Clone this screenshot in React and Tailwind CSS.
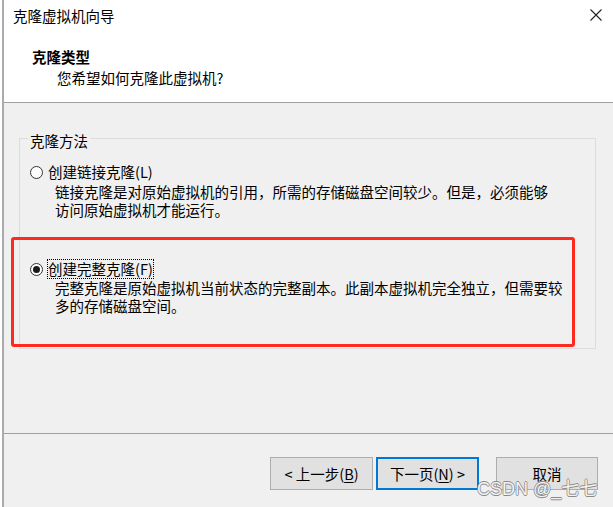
import React from "react";

const font = "font-['Noto_Sans_CJK_SC','Microsoft_YaHei',sans-serif]";

function Radio({ checked }) {
  return (
    <span className="w-[13px] h-[13px] rounded-full border border-[#333333] bg-white flex items-center justify-center shrink-0">
      {checked && <span className="w-[7px] h-[7px] rounded-full bg-[#1a1a1a]" />}
    </span>
  );
}

export default function App() {
  return (
    <div className={`relative w-[613px] h-[507px] bg-white pl-[2px] overflow-hidden text-black ${font} text-[14.5px] leading-[18px]`}>
      <div className="h-full flex flex-col border-l-2 border-[#ababab]">
        {/* Header */}
        <div className="h-[103px] bg-white border-b border-[#a0a0a0] flex flex-col">
          <div className="h-[30px] flex items-center justify-between pl-[9px] pr-[11px]">
            <span className="leading-[21px]">克隆虚拟机向导</span>
            <svg width="12" height="12" viewBox="0 0 12 12" className="mt-[-1px]">
              <path d="M0.5 0.5 L11.5 11.5 M11.5 0.5 L0.5 11.5" stroke="#222" strokeWidth="1.1" fill="none" />
            </svg>
          </div>
          <div className="mt-[16px] pl-[28px] font-bold leading-[21px]">克隆类型</div>
          <div className="pl-[53px] leading-[21px]">您希望如何克隆此虚拟机?</div>
        </div>

        {/* Body */}
        <div className="h-[331px] bg-[#f0f0f0] border-b border-[#a0a0a0] pt-[35px] pl-[15px] pr-[17px]">
          <div className="relative h-[211px] border border-[#dcdcdc] pt-[23px] pl-[10px]">
            <span className="absolute left-[8px] top-[-7px] px-[2px] bg-[#f0f0f0]">克隆方法</span>

            <div className="flex items-center gap-[4px]">
              <Radio checked={false} />
              <span className="border border-transparent whitespace-nowrap">
                创建链接克隆(L)
              </span>
            </div>
            <div className="pl-[25px] mt-[1px] whitespace-nowrap">
              <div>链接克隆是对原始虚拟机的引用，所需的存储磁盘空间较少。但是，必须能够</div>
              <div>访问原始虚拟机才能运行。</div>
            </div>

            <div className="flex items-center gap-[4px] mt-[40px]">
              <Radio checked={true} />
              <span className="border border-dotted border-black whitespace-nowrap">
                创建完整克隆(F)
              </span>
            </div>
            <div className="pl-[25px] whitespace-nowrap">
              <div>完整克隆是原始虚拟机当前状态的完整副本。此副本虚拟机完全独立，但需要较</div>
              <div>多的存储磁盘空间。</div>
            </div>
          </div>
        </div>

        {/* Footer */}
        <div className="flex-1 bg-[#f0f0f0] pt-[23px] pr-[15px] flex justify-end items-start">
          <button className="w-[103px] h-[33px] bg-[#e1e1e1] border border-[#adadad] flex items-center justify-center">
            <span>&lt; 上一步(<span className="underline underline-offset-2">B</span>)</span>
          </button>
          <button className="ml-[3px] w-[103px] h-[33px] bg-[#e1e1e1] border-2 border-[#0078d7] flex items-center justify-center">
            <span>下一页(<span className="underline underline-offset-2">N</span>) &gt;</span>
          </button>
          <button className="ml-[17px] w-[102px] h-[33px] bg-[#e1e1e1] border border-[#adadad] flex items-center justify-center">
            取消
          </button>
        </div>
      </div>

      {/* red annotation */}
      <div className="absolute left-[11px] top-[237px] w-[564px] h-[110px] border-[3px] border-[#ff2a1f] rounded-[3px] pointer-events-none" />

      {/* watermark */}
      <div className="absolute left-[477px] top-[479px] text-[18px] leading-[20px] font-['Liberation_Sans','Noto_Sans_CJK_SC',sans-serif] text-[#f2f2f2] [text-shadow:0.7px_0_#8a8a8a,-0.7px_0_#8a8a8a,0_0.7px_#8a8a8a,0_-0.7px_#8a8a8a] whitespace-nowrap">
        CSDN @_七七
      </div>
    </div>
  );
}
